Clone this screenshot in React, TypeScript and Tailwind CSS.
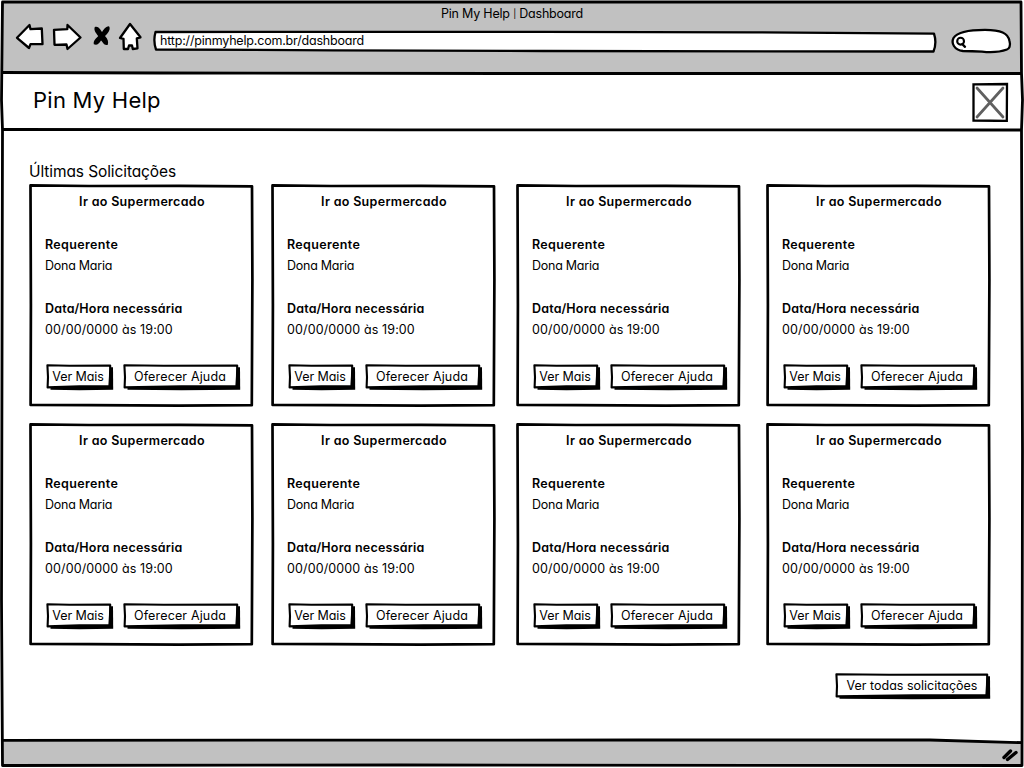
import React from "react";

const requests = Array.from({ length: 8 }, (_, id) => ({
  id,
  title: "Ir ao Supermercado",
  name: "Dona Maria",
  date: "00/00/0000 às 19:00",
}));

function Outline({ w, h, d, sw = 2.7, fill = "none" }: { w: number; h: number; d: string; sw?: number; fill?: string }) {
  return (
    <svg className="pointer-events-none absolute top-0 left-0 overflow-visible" width={w} height={h} aria-hidden="true">
      <path d={d} fill={fill} stroke="#000" strokeWidth={sw} strokeLinejoin="round" strokeLinecap="round" />
    </svg>
  );
}

function SketchButton({ label, w, text }: { label: string; w: number; text: string }) {
  return (
    <button className="relative flex h-[26px] shrink-0 items-center justify-center pb-px" style={{ width: w }}>
      <svg className="absolute top-0 left-0 overflow-visible" width={w} height={26} aria-hidden="true">
        <path d={`M4.5 4L${w} 3.2L${w + 0.2} 25.8L${w / 2} 26.3L4.5 25.8Z`} fill="#000" />
        <path
          d={`M1.4 1.2L${w * 0.35} 1.8L${w - 2.8} 1.5L${w - 3} 12L${w - 3.6} 22.2L${w * 0.5} 22.2L1.6 23.4L2 13Z`}
          fill="#fff"
          stroke="#000"
          strokeWidth="2.1"
          strokeLinejoin="round"
        />
      </svg>
      <span className={`relative text-[12.5px] whitespace-nowrap ${text}`}>{label}</span>
    </button>
  );
}

function RequestCard({ title, name, date }: { title: string; name: string; date: string }) {
  return (
    <article className="relative h-[223px] w-[225px] px-4 pt-[7px] text-[12.5px] leading-[21px]">
      <Outline w={225} h={223} d="M1.5 1.4L60 2L150 1.8L223 2.3L223.4 95L222.8 221.2L150 221.6L60 221.2L1.6 221L1.9 120Z" />
      <h2 className="pl-px text-center font-semibold tracking-[0.32px] whitespace-nowrap">{title}</h2>
      <h3 className="mt-[22px] font-semibold tracking-[0.36px]">Requerente</h3>
      <p className="tracking-[-0.25px]">{name}</p>
      <h3 className="mt-[22px] font-semibold tracking-[0.22px] whitespace-nowrap">Data/Hora necessária</h3>
      <p className="tracking-[0.12px]">{date}</p>
      <div className="mt-[24px] ml-px flex gap-[10px]">
        <SketchButton label="Ver Mais" w={67} text="pr-[3px] tracking-[-0.1px]" />
        <SketchButton label="Oferecer Ajuda" w={117} text="pr-[3px] tracking-[0.15px]" />
      </div>
    </article>
  );
}

export default function App() {
  return (
    <main className="relative flex h-[768px] w-[1024px] flex-col overflow-hidden bg-white font-[Inter,'Liberation_Sans',sans-serif] text-[13px] text-black [font-feature-settings:'cv11']">
      <header className="flex h-[73px] shrink-0 flex-col bg-[#c1c1c1]">
        <div className="flex h-[27px] items-center justify-center pt-px text-[12.5px] tracking-[-0.2px] whitespace-pre">
          <span>Pin My Help </span>
          <span className="text-[9px]">|</span>
          <span> Dashboard</span>
        </div>
        <div className="flex h-[30px] items-center pl-[14px]">
          <svg width="130" height="44" viewBox="14 20 130 44" className="shrink-0" aria-hidden="true">
            <g fill="#fff" stroke="#000" strokeWidth="2.3" strokeLinejoin="round" strokeLinecap="round">
              <path d="M17 37.8L29.5 25L30.5 29.2L41.8 28.5L42.5 44L30.5 44.2L29 48Z" />
              <path d="M54 29.8L67.3 29.2L67.5 25L80.5 37.5L67.5 49L66.5 44.5L54.5 44.8Z" />
              <path d="M130 24L140.5 37.3L136.8 38.3L137.5 48.3L132.8 49L132 45.5L129 45.5L128 49L123.8 49L123.5 38.8L120 38Z" />
            </g>
            <path d="M94.8 27C98.5 25.6 100.6 30 102 32C103.5 30 105 26.6 109 26.2C111.4 29.5 107 34 105 36C108 39 108.6 42 107.8 44.7C104 46 103 42 101 40.5C99 44 97 45.4 93.8 44.3C93 40 97 38 98.2 36C96 33 93.5 30.5 94.8 27Z" />
          </svg>
          <div className="relative ml-[9px] flex h-[22px] w-[784px] shrink-0 items-center pl-[7px] text-[12.5px] tracking-[-0.19px] whitespace-nowrap">
            <Outline w={784} h={22} sw={2.3} fill="#fff" d="M2.5 1L390 .9L600 1.4L781 2.6Q784 12 780.5 20.5L390 20L180 19.3L3 18.5Q0 10 2.5 1Z" />
            <span className="relative pb-[2px]">http://pinmyhelp.com.br/dashboard</span>
          </div>
          <svg width="62" height="28" viewBox="950 28 62 28" className="ml-[13px] shrink-0 overflow-visible" aria-hidden="true">
            <path d="M963 51C954 50 951 43 953.5 38C958 30.5 974 29.8 985 29.8C1001 30 1008 33 1009.5 41C1011 46 1009 49 1007 49.5C999 52.5 989 52.5 982 51.7Q972 51 963 51Z" fill="#fff" stroke="#000" strokeWidth="2.3" />
            <circle cx="960.6" cy="41.2" r="3.4" fill="none" stroke="#000" strokeWidth="2.1" />
            <path d="M962.3 44.2L965 46.8" fill="none" stroke="#000" strokeWidth="2.3" strokeLinecap="round" />
          </svg>
        </div>
      </header>

      <section className="flex h-[57px] shrink-0 items-center justify-between pr-[15px] pl-[33px]">
        <h1 className="pb-[3px] text-[22px] tracking-[0.25px] whitespace-nowrap">Pin My Help</h1>
        <svg width="38" height="40" viewBox="971 82 38 40" aria-hidden="true">
          <path d="M973.5 84.3L1007 84L1006.8 121L973.5 120.5Z" fill="#fff" stroke="#000" strokeWidth="2.3" />
          <path d="M977 88L1003 117M1003 88L977 117" fill="none" stroke="#606060" strokeWidth="2.7" strokeLinecap="round" />
        </svg>
      </section>

      <section className="flex flex-1 flex-col pl-[29px]">
        <h2 className="mt-[29px] h-[25px] text-[15.5px] leading-[25px] tracking-[-0.1px] whitespace-nowrap">Últimas Solicitações</h2>
        <div className="grid grid-cols-[242px_245px_250px_225px] gap-y-[16px]">
          {requests.map((r) => (
            <RequestCard key={r.id} title={r.title} name={r.name} date={r.date} />
          ))}
        </div>
        <div className="mt-[27px] flex justify-end pr-[34px]">
          <SketchButton label="Ver todas solicitações" w={155} text="pt-px pr-px" />
        </div>
      </section>

      <footer className="flex h-[27px] shrink-0 items-end justify-end bg-[#c1c1c1] pr-[3px] pb-[4px]">
        <svg width="20" height="18" viewBox="1001 746 20 18" aria-hidden="true">
          <path d="M1004 757.5L1010.5 751M1007.5 759.5L1016 752.5" stroke="#000" strokeWidth="3.4" strokeLinecap="round" />
        </svg>
      </footer>

      <svg className="pointer-events-none absolute top-0 left-0" width="1024" height="768" fill="none" stroke="#000" strokeWidth="2.8" aria-hidden="true">
        <path d="M-2 -2H1026V770H-2ZM2.5 2V765.5L1021.5 765L1022 2Z" fill="#fff" fillRule="evenodd" stroke="none" />
        <path d="M2.5 2L1021 2L1021.5 73L1022.5 100L1021.5 130L1022.5 450L1022 765.5L400 765L2.5 765.5L1.5 600L2.5 130L1.5 100Z" strokeLinejoin="round" />
        <path d="M2 72.5L160 73L500 73.5L1022 73.5M2 129.5L400 129.8L1022 130M2 740.3L640 740L930 740L1022 742.7" />
      </svg>
    </main>
  );
}
